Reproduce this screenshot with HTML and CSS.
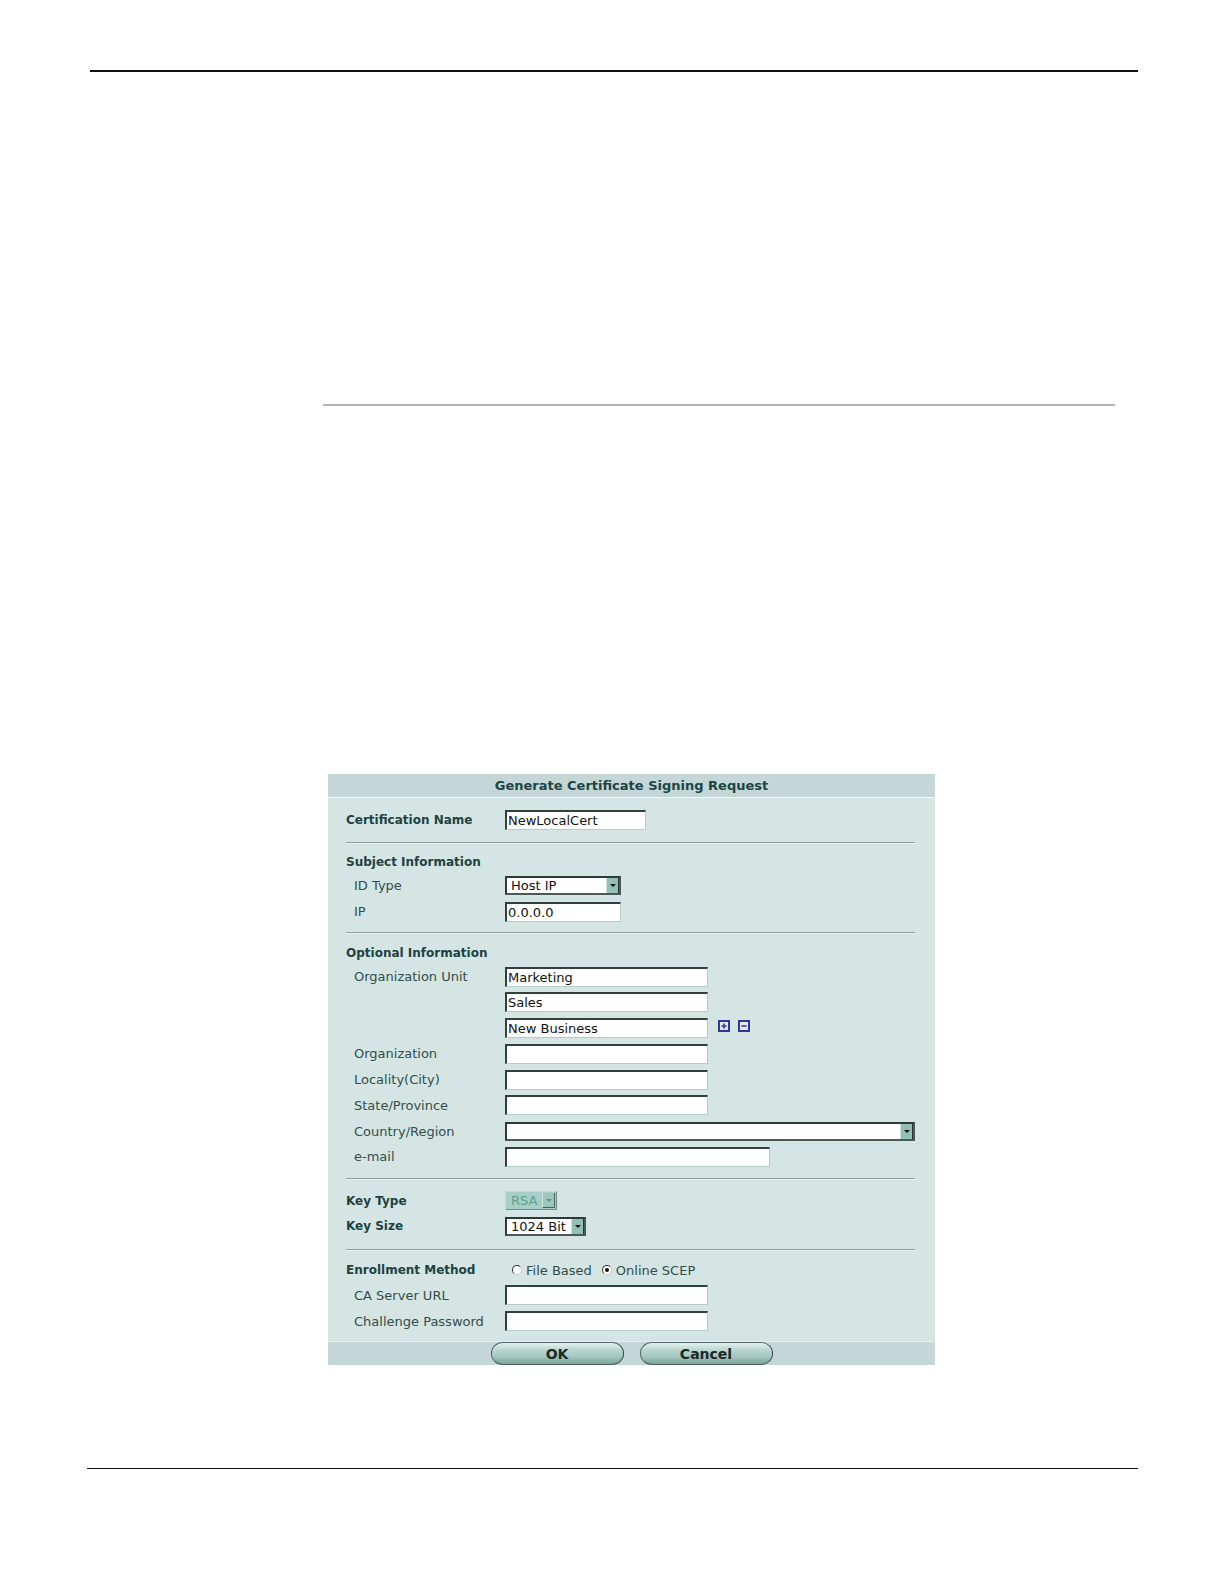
FILE: index.html
```html
<!DOCTYPE html>
<html>
<head>
<meta charset="utf-8">
<title>Generate Certificate Signing Request</title>
<link rel="stylesheet" href="styles.css">
</head>
<body>
<div class="page">
  <div class="rule-top"></div>
  <div class="rule-mid"></div>

  <div class="dialog">
    <div class="dlg-title">Generate Certificate Signing Request</div>
    <div class="dlg-body">
      <div class="sec sec-first">
        <div class="row"><span class="lbl b">Certification Name</span><span class="fld"><span class="inp w140">NewLocalCert</span></span></div>
      </div>
      <div class="sep"></div>

      <div class="sec">
        <div class="row head"><span class="lbl b">Subject Information</span></div>
        <div class="row"><span class="lbl sub">ID Type</span><span class="fld"><span class="sel w115"><span class="sel-txt">Host IP</span><span class="sel-btn"><i class="tri"></i></span></span></span></div>
        <div class="row"><span class="lbl sub">IP</span><span class="fld"><span class="inp w115">0.0.0.0</span></span></div>
      </div>
      <div class="sep"></div>

      <div class="sec">
        <div class="row head"><span class="lbl b">Optional Information</span></div>
        <div class="row"><span class="lbl sub">Organization Unit</span><span class="fld"><span class="inp w201">Marketing</span></span></div>
        <div class="row"><span class="lbl sub"></span><span class="fld"><span class="inp w201">Sales</span></span></div>
        <div class="row"><span class="lbl sub"></span><span class="fld"><span class="inp w201">New Business</span>
          <svg class="ico first" width="12" height="12" viewBox="0 0 12 12"><rect x="1" y="1" width="10" height="10" fill="#e4e6f4" stroke="#2f3796" stroke-width="2"/><path d="M6 3.5v5M3.5 6h5" stroke="#2f3796" stroke-width="1.6"/></svg>
          <svg class="ico" width="12" height="12" viewBox="0 0 12 12"><rect x="1" y="1" width="10" height="10" fill="#e4e6f4" stroke="#2f3796" stroke-width="2"/><path d="M3.5 6h5" stroke="#2f3796" stroke-width="1.6"/></svg>
        </span></div>
        <div class="row"><span class="lbl sub">Organization</span><span class="fld"><span class="inp w201"></span></span></div>
        <div class="row"><span class="lbl sub">Locality(City)</span><span class="fld"><span class="inp w201"></span></span></div>
        <div class="row"><span class="lbl sub">State/Province</span><span class="fld"><span class="inp w201"></span></span></div>
        <div class="row"><span class="lbl sub">Country/Region</span><span class="fld"><span class="sel wfull"><span class="sel-txt"></span><span class="sel-btn"><i class="tri"></i></span></span></span></div>
        <div class="row"><span class="lbl sub">e-mail</span><span class="fld"><span class="inp w262"></span></span></div>
      </div>
      <div class="sep"></div>

      <div class="sec sec-key">
        <div class="row"><span class="lbl b">Key Type</span><span class="fld"><span class="sel w51 dis"><span class="sel-txt">RSA</span><span class="sel-btn"><i class="tri"></i></span></span></span></div>
        <div class="row"><span class="lbl b">Key Size</span><span class="fld"><span class="sel w80"><span class="sel-txt">1024 Bit</span><span class="sel-btn"><i class="tri"></i></span></span></span></div>
      </div>
      <div class="sep"></div>

      <div class="sec sec-last">
        <div class="row enroll"><span class="lbl b">Enrollment Method</span><span class="fld radios">
          <span class="radio"></span><span class="rtxt">File Based</span>
          <span class="radio on"></span><span class="rtxt">Online SCEP</span>
        </span></div>
        <div class="row"><span class="lbl sub">CA Server URL</span><span class="fld"><span class="inp w201"></span></span></div>
        <div class="row"><span class="lbl sub">Challenge Password</span><span class="fld"><span class="inp w201"></span></span></div>
      </div>
    </div>
    <div class="dlg-foot">
      <span class="btn">OK</span>
      <span class="btn">Cancel</span>
    </div>
  </div>

  <div class="rule-bottom"></div>
</div>
</body>
</html>
```

FILE: styles.css
```css
html, body {
  margin: 0;
  padding: 0;
  background: #ffffff;
}

.page {
  width: 1224px;
  min-height: 1584px;
  padding-top: 70px;
  box-sizing: border-box;
  font-family: "DejaVu Sans", Verdana, sans-serif;
}

.rule-top {
  margin-left: 90px;
  width: 1048px;
  height: 2px;
  background: #111;
}

.rule-mid {
  margin-top: 332px;
  margin-left: 323px;
  width: 792px;
  height: 2px;
  background: #b4b4b4;
}

.rule-bottom {
  margin-top: 103px;
  margin-left: 87px;
  width: 1051px;
  height: 1px;
  background: #111;
}

/* dialog */
.dialog {
  margin-top: 368px;
  margin-left: 328px;
  width: 607px;
}

.dlg-title {
  height: 23px;
  line-height: 24px;
  background: #c4d7d6;
  border-bottom: 1px solid #f4f9f8;
  text-align: center;
  font-weight: bold;
  font-size: 13px;
  color: #1d4545;
}

.dlg-body {
  background: #d4e5e3;
  padding: 0 20px 0 18px;
}

.sec {
  padding: 8px 0 8px;
}
.sec-first { padding-top: 9.5px; padding-bottom: 8.5px; }
.sec-key { padding-bottom: 10px; }
.sec-last { padding-top: 7px; padding-bottom: 7.4px; }

.sep {
  height: 1px;
  background: #8d9e9c;
  border-bottom: 1px solid #eaf3f2;
}

.row {
  display: grid;
  grid-template-columns: 159px 1fr;
  align-items: center;
  height: 25.75px;
}
.row.head { height: 21.2px; }
.row.enroll { height: 24.25px; }

.lbl {
  font-size: 13px;
  color: #334d4b;
  white-space: nowrap;
}
.lbl.b {
  font-weight: bold;
  font-size: 12px;
  color: #1c4242;
}
.lbl.sub { padding-left: 8px; }

.fld {
  display: flex;
  align-items: center;
}

/* text inputs */
.inp {
  box-sizing: border-box;
  display: block;
  height: 20px;
  background: #fff;
  border-top: 2px solid #34403e;
  border-left: 2px solid #34403e;
  border-right: 1px solid #b3ccc7;
  border-bottom: 1px solid #b3ccc7;
  font-size: 13px;
  line-height: 17px;
  padding-left: 1px;
  color: #111;
  white-space: nowrap;
  overflow: hidden;
}
.w140 { width: 141px; }
.w115 { width: 116px; }
.w201 { width: 203px; }
.w262 { width: 265px; }

/* selects */
.sel {
  box-sizing: border-box;
  display: flex;
  height: 19px;
  background: #fff;
  border: 2px solid #2e3a38;
  border-right-color: #4b5a58;
  border-bottom-color: #4b5a58;
}
.sel.w115 { width: 116px; }
.w80 { width: 81px; }
.w51 { width: 52px; }
.wfull { width: 410px; }

.sel-txt {
  flex: 1;
  font-size: 13px;
  line-height: 15px;
  padding-left: 4px;
  color: #111;
  white-space: nowrap;
  overflow: hidden;
}
.sel-btn {
  width: 11px;
  background: #92c0b6;
  border-left: 1px solid #cfe4df;
  border-right: 1px solid #2a3432;
  display: flex;
  align-items: center;
  justify-content: center;
}
.tri {
  display: block;
  width: 0;
  height: 0;
  border-left: 3px solid transparent;
  border-right: 3px solid transparent;
  border-top: 3px solid #111;
}

.sel.dis {
  background: #a7cec5;
  border-color: #c2ddd7 #6f8e88 #6f8e88 #c2ddd7;
  border-width: 1px;
  padding: 1px;
}
.sel.dis .sel-txt {
  color: #5f9f95;
  background: #a7cec5;
}
.sel.dis .sel-btn {
  background: #9dc6bd;
  border-left: 1px solid #d2e6e1;
  border-right: 1px solid #4e605c;
  border-bottom: 1px solid #4e605c;
}
.sel.dis .tri { border-top-color: #6e908a; }

/* add / remove icons */
.ico { display: block; margin-left: 8px; margin-bottom: 4px; }
.ico.first { margin-left: 10px; }

/* radios */
.radios {
  padding-left: 7px;
  font-size: 13px;
  color: #334d4b;
}
.radio {
  box-sizing: border-box;
  width: 10px;
  height: 10px;
  border-radius: 50%;
  background: #fff;
  border: 1px solid #333;
  border-right-color: #c8c8c8;
  border-bottom-color: #c8c8c8;
  margin-right: 4px;
  display: flex;
  align-items: center;
  justify-content: center;
}
.radio.on::after {
  content: "";
  width: 4px;
  height: 4px;
  border-radius: 50%;
  background: #111;
}
.rtxt { margin-right: 10px; }

/* footer */
.dlg-foot {
  height: 24.2px;
  background: #c4d7d6;
  border-top: 1px solid #e6f0ef;
  box-sizing: border-box;
  display: flex;
  justify-content: center;
  align-items: flex-end;
  gap: 16px;
}
.btn {
  box-sizing: border-box;
  width: 133px;
  height: 23px;
  border-radius: 12px / 11px;
  border: 1px solid #55696a;
  border-right-color: #3b4b4a;
  border-bottom-color: #4a5e5c;
  background: linear-gradient(to bottom, #e6f2f0 0%, #bcd8d2 30%, #a3c6be 65%, #7ea59d 100%);
  text-align: center;
  font-weight: bold;
  font-size: 14px;
  line-height: 23px;
  color: #1c2826;
}
```
